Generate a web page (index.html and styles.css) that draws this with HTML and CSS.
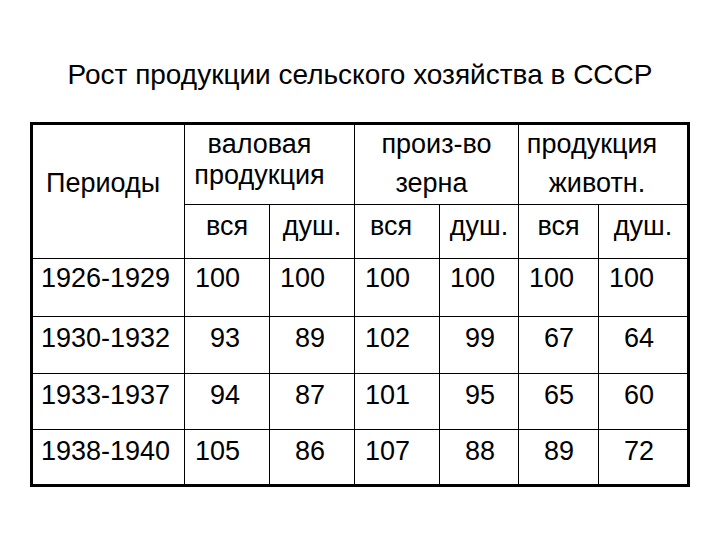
FILE: index.html
```html
<!DOCTYPE html>
<html lang="ru">
<head>
<meta charset="utf-8">
<title>Рост продукции сельского хозяйства в СССР</title>
<link rel="stylesheet" href="styles.css">
</head>
<body>
<h1 class="title">Рост продукции сельского хозяйства в СССР</h1>
<div class="grid">
  <div class="c periods">Периоды</div>
  <div class="c bl grp g1"><div>валовая</div><div>продукция</div></div>
  <div class="c bl grp g2"><div>произ-во</div><div class="zr">зерна</div></div>
  <div class="c bl grp g3"><div>продукция</div><div class="zv">животн.</div></div>

  <div class="c bl bt sub">вся</div>
  <div class="c bl bt sub">душ.</div>
  <div class="c bl bt sub s4">вся</div>
  <div class="c bl bt sub">душ.</div>
  <div class="c bl bt sub">вся</div>
  <div class="c bl bt sub">душ.</div>

  <div class="c bt per r1">1926-1929</div>
  <div class="c bl bt num r1"><span class="n">100</span></div>
  <div class="c bl bt num r1"><span class="n">100</span></div>
  <div class="c bl bt num r1"><span class="n">100</span></div>
  <div class="c bl bt num r1"><span class="n">100</span></div>
  <div class="c bl bt num r1"><span class="n">100</span></div>
  <div class="c bl bt num r1"><span class="n">100</span></div>

  <div class="c bt per">1930-1932</div>
  <div class="c bl bt num"><span class="n">93</span></div>
  <div class="c bl bt num"><span class="n">89</span></div>
  <div class="c bl bt num"><span class="n">102</span></div>
  <div class="c bl bt num"><span class="n">99</span></div>
  <div class="c bl bt num"><span class="n">67</span></div>
  <div class="c bl bt num"><span class="n">64</span></div>

  <div class="c bt per">1933-1937</div>
  <div class="c bl bt num"><span class="n">94</span></div>
  <div class="c bl bt num"><span class="n">87</span></div>
  <div class="c bl bt num"><span class="n">101</span></div>
  <div class="c bl bt num"><span class="n">95</span></div>
  <div class="c bl bt num"><span class="n">65</span></div>
  <div class="c bl bt num"><span class="n">60</span></div>

  <div class="c bt per">1938-1940</div>
  <div class="c bl bt num"><span class="n">105</span></div>
  <div class="c bl bt num"><span class="n">86</span></div>
  <div class="c bl bt num"><span class="n">107</span></div>
  <div class="c bl bt num"><span class="n">88</span></div>
  <div class="c bl bt num"><span class="n">89</span></div>
  <div class="c bl bt num"><span class="n">72</span></div>
</div>
</body>
</html>
```
FILE: styles.css
```css
html, body {
  margin: 0;
  padding: 0;
  background: #ffffff;
}
body {
  width: 720px;
  height: 540px;
  font-family: "Liberation Sans", Arial, sans-serif;
  color: #000;
}
.title {
  margin: 60px 0 0 0;
  font-size: 28px;
  font-weight: normal;
  line-height: 30px;
  text-align: center;
}
.grid {
  box-sizing: border-box;
  margin: 32px 0 0 30px;
  width: 660px;
  border: 3px solid #000;
  display: grid;
  grid-template-columns: 151px 85px 85px 85px 79px 80px 89px;
  grid-template-rows: 79px 54px 58px 57px 56px 55px;
  font-size: 27px;
  line-height: 31px;
}
.c {
  box-sizing: border-box;
  white-space: nowrap;
}
.bl { border-left: 1px solid #000; }
.bt { border-top: 1px solid #000; }
.periods {
  grid-row: 1 / span 2;
  padding: 43px 0 0 13px;
}
.grp { text-align: center; }
.g1 { grid-column: 2 / span 2; padding: 4px 20px 0 0; }
.g2 { grid-column: 4 / span 2; line-height: 39px; padding-top: 0; }
.g3 { grid-column: 6 / span 2; line-height: 39px; padding-right: 22px; }
.zr { padding-right: 10px; }
.zv { padding-left: 10px; }
.sub {
  text-align: center;
  padding-top: 6px;
}
.s4 { padding-right: 12px; }
.per { padding: 6px 0 0 8px; }
.num { padding: 6px 0 0 10px; }
.r1 { padding-top: 4px; }
.n {
  display: inline-block;
  width: 1.668em;
  text-align: right;
}
```
